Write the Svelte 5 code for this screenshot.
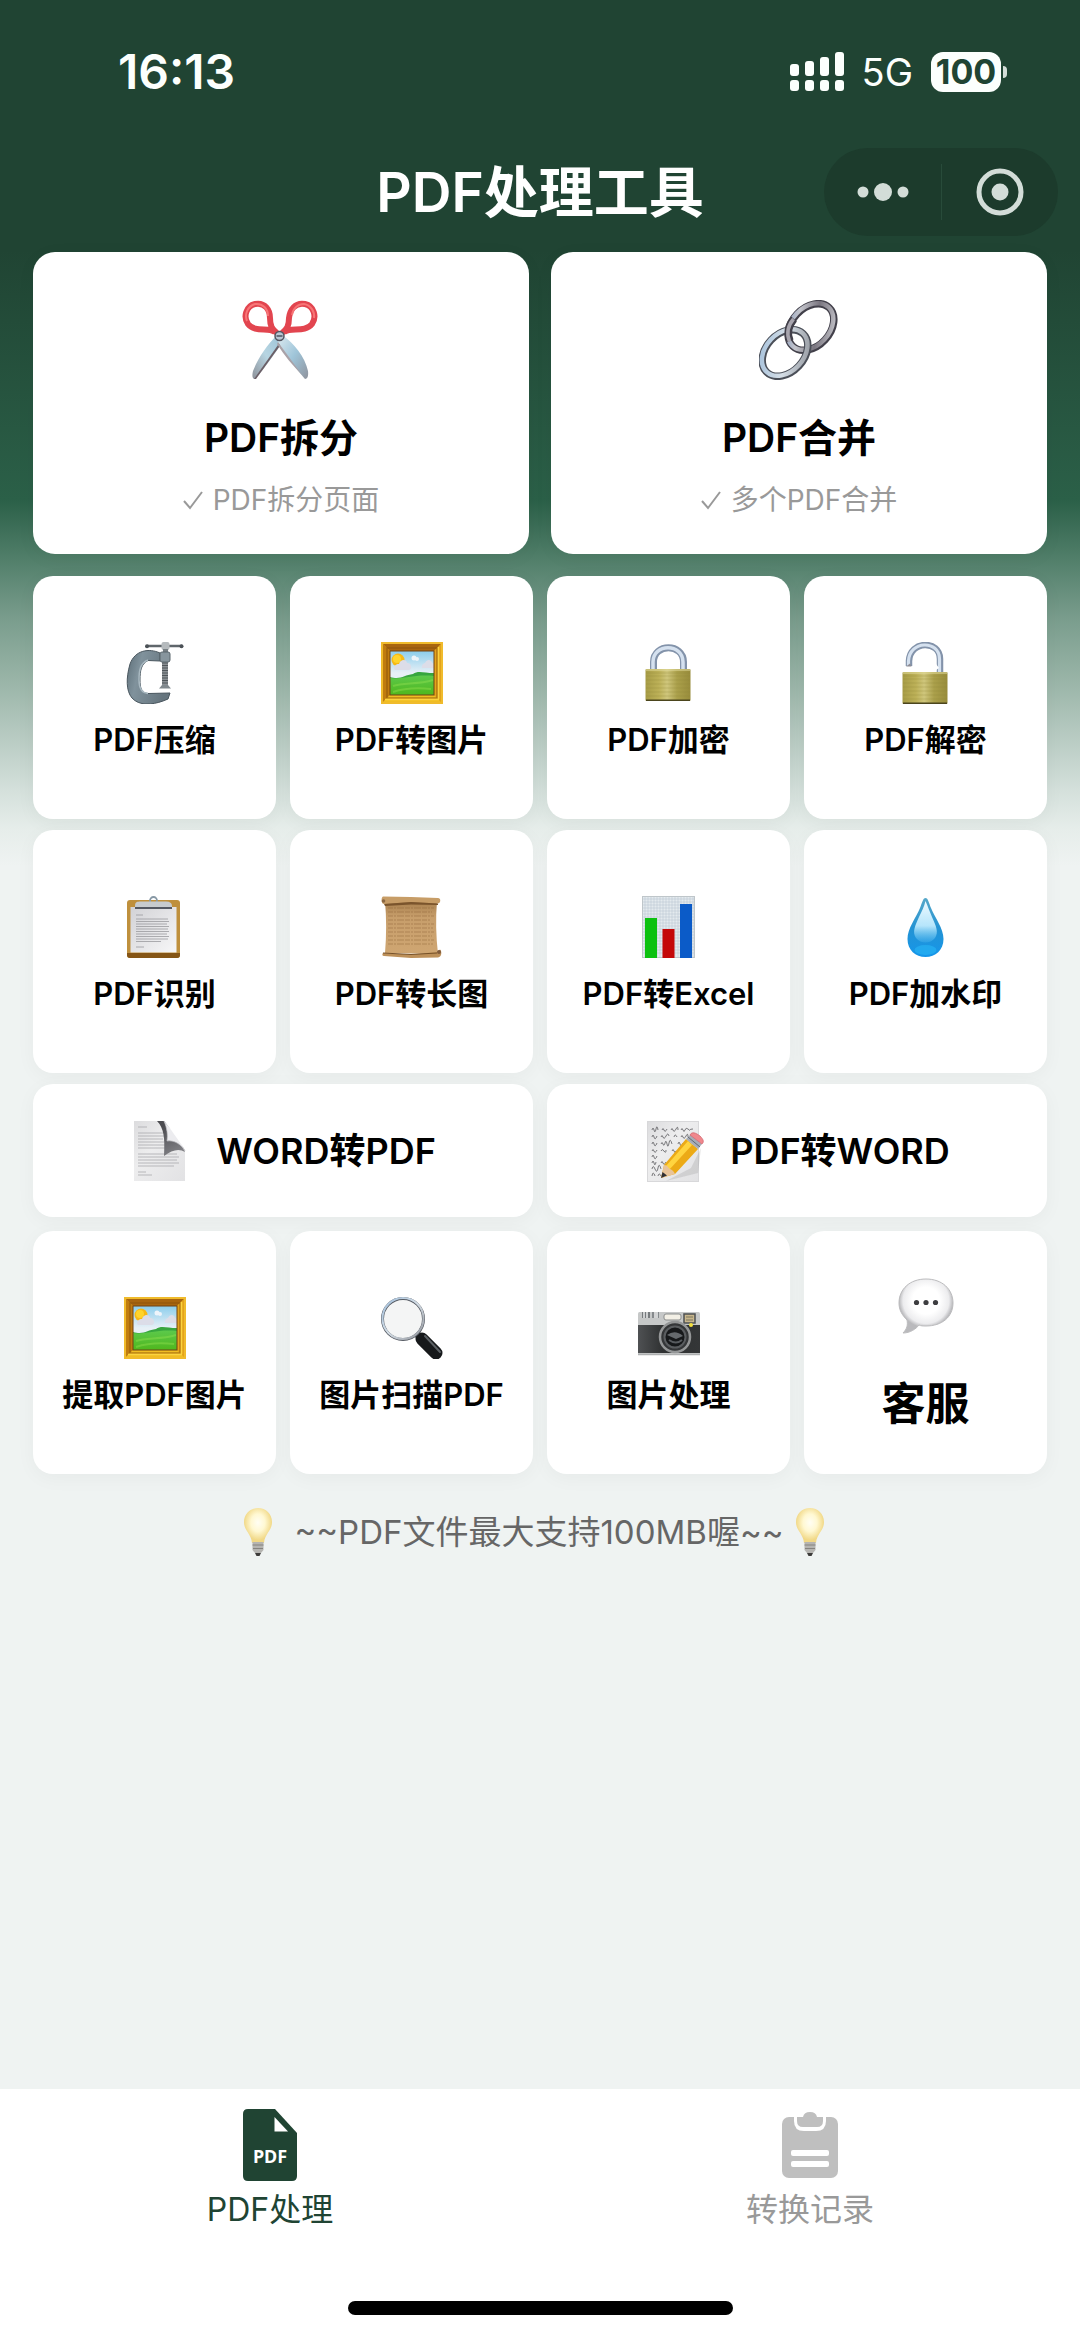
<script>
  const heroes = [
    { icon: 'scissors', title: 'PDF拆分', note: 'PDF拆分页面' },
    { icon: 'chain', title: 'PDF合并', note: '多个PDF合并' }
  ];
  const tools = [
    { icon: 'clamp', title: 'PDF压缩' },
    { icon: 'frame', title: 'PDF转图片' },
    { icon: 'lock', title: 'PDF加密' },
    { icon: 'unlock', title: 'PDF解密' },
    { icon: 'clipboard', title: 'PDF识别' },
    { icon: 'scroll', title: 'PDF转长图' },
    { icon: 'chart', title: 'PDF转Excel' },
    { icon: 'drop', title: 'PDF加水印' }
  ];
  const words = [
    { icon: 'page', title: 'WORD转PDF' },
    { icon: 'memo', title: 'PDF转WORD' }
  ];
  const extras = [
    { icon: 'frame', title: '提取PDF图片' },
    { icon: 'magnifier', title: '图片扫描PDF' },
    { icon: 'camera', title: '图片处理' }
  ];
  const bars = [12, 15, 19, 24];
  let tab = $state('tools');
</script>

{#snippet art(name)}
  {#if name === 'scissors'}
    <svg class="art big" viewBox="0 0 80 80" aria-hidden="true">
      <path d="M36 35 41 43C32 56 24 68 14 79 11 79 11 75 12 71 17 58 26 45 36 35Z" fill="url(#bladeL)" />
      <path d="M37 45 41 43 15 79 13 79Z" fill="#6b5f66" />
      <path d="M41 35C53 43 64 57 67 71 67.500 75 67 79 64 79 54 68 46 55 37 42Z" fill="url(#bladeR)" />
      <path d="M37 42 64 79 62 76C52 66 43 55 36 44Z" fill="#a9a2a8" />
      <g fill="none" stroke="#e2454f" stroke-width="6">
        <path d="M34 32C27 27 14 33 7 24 2 17 5 6 14 4 24 2 29 10 29 18 29 26 31 29 36 33" />
        <path d="M43 32C50 27 64 33 71 24 76 17 73 6 64 4 54 2 49 10 48 18 48 26 46 29 41 33" />
      </g>
      <g fill="none" stroke="#ff8584" stroke-width="2" opacity=".75">
        <path d="M6 21C3 14 7 6 14 4 22 3 27 9 27 16" />
        <path d="M51 15C52 8 57 4 63 4 70 5 74 12 73 18" />
      </g>
      <circle cx="38.500" cy="36" r="4.500" fill="#b9c6d3" stroke="#53545f" stroke-width="1.500" />
      <path d="M35.500 36h6" stroke="#4d5360" stroke-width="1.500" />
    </svg>
  {:else if name === 'chain'}
    <svg class="art big" viewBox="0 0 80 80" aria-hidden="true">
      <g fill="none">
        <ellipse cx="52" cy="27" rx="26.500" ry="19" transform="rotate(-47 52 27)" stroke="#42404a" stroke-width="7.500" />
        <ellipse cx="51.500" cy="26.500" rx="26.500" ry="19" transform="rotate(-47 51.500 26.500)" stroke="url(#steel)" stroke-width="4.500" />
        <ellipse cx="26" cy="53" rx="26.500" ry="19" transform="rotate(-47 26 53)" stroke="#4b4f58" stroke-width="7.500" />
        <ellipse cx="25.700" cy="52.500" rx="26.500" ry="19" transform="rotate(-47 25.700 52.500)" stroke="url(#steel2)" stroke-width="4.500" />
        <path d="M35 19C29 26 28 34 31 41" stroke="#42404a" stroke-width="7.500" />
        <path d="M34.500 19C28.500 26 27.500 34 30.500 41.500" stroke="#a8a5ae" stroke-width="3.500" />
      </g>
    </svg>
  {:else if name === 'clamp'}
    <svg class="art" viewBox="0 0 62 62" aria-hidden="true">
      <path d="M36 11C25 6 11 8 6 22 2 36 2 49 8 56 15 64 28 63 39 59L44 57 46 51 24 51.500C17 51 16 45 16 38 16 29 17 22 24 18.500L36 19Z" fill="url(#iron)" stroke="#49565e" />
      <path d="M24 51.500C17 51 15 45 15 38 15 29 16 21 24 18" fill="none" stroke="#a9b9c1" stroke-width="1.500" />
      <path d="M23 4H58" stroke="#5f666b" stroke-width="2.500" />
      <circle cx="23" cy="4.300" r="2" fill="#4b5156" /><circle cx="57.500" cy="4.300" r="2" fill="#4b5156" />
      <rect x="38" y="16" width="6" height="29" fill="#8b9094" />
      <path d="M41 18V45" stroke="#50565a" stroke-width="6" stroke-dasharray="1 1.500" />
      <rect x="37.500" y="0" width="8" height="8" rx="2" fill="#b5babd" />
      <rect x="39" y="7" width="5" height="4" fill="#777f84" />
      <rect x="36" y="10" width="10" height="10" rx="2" fill="#87959d" stroke="#5a666d" />
      <path d="M38 43H44L47 46.500H35Z" fill="#81898e" />
    </svg>
  {:else if name === 'frame'}
    <svg class="art" viewBox="0 0 62 62" aria-hidden="true">
      <rect width="62" height="62" fill="#d99a16" />
      <path d="M0 0H62L53 9H9Z" fill="#a8650f" /><path d="M0 0 9 9V53L0 62Z" fill="#c07c0f" />
      <path d="M62 0V62L53 53V9Z" fill="#e3a31b" /><path d="M0 62 9 53H53L62 62Z" fill="#f0bd22" />
      <rect x="1" y="1" width="60" height="60" fill="none" stroke="#f0bb2c" stroke-width="2" />
      <rect x="6" y="6" width="50" height="50" fill="none" stroke="#8c540c" stroke-width="1.500" opacity=".6" />
      <path d="M4 57.500H58M57.500 5V57" stroke="#fbd33f" stroke-width="1.500" />
      <rect x="9" y="9" width="44" height="44" fill="url(#sky)" />
      <circle cx="17" cy="18" r="6.500" fill="#f7b915" /><circle cx="16" cy="17" r="4" fill="#ffd42b" />
      <path d="M13 27C13 22 17 22 18 22 20 16 26 18 26 21 30 20 32 27 28 28H14ZM41 26C40 22 44 21 44 21 46 16 51 18 51 21L53 22V26Z" fill="#dcdde8" />
      <circle cx="33" cy="16" r="2.500" fill="#eef4fa" /><circle cx="36" cy="17" r="2" fill="#eef4fa" />
      <path d="M9 35C20 38 23 33 32 32 37 28 43 31 53 31V53H9Z" fill="#37a63e" />
      <path d="M9 36C20 38 33 32 53 34V53H9Z" fill="url(#grass)" />
      <path d="M12 44C23 40 36 43 52 38M12 50C24 46 40 46 50 47" fill="none" stroke="#a0e957" stroke-width="2" opacity=".35" />
      <rect x="9" y="9" width="44" height="44" fill="none" stroke="#704315" stroke-width="1" />
    </svg>
  {:else if name === 'lock' || name === 'unlock'}
    <svg class="art" viewBox="0 0 62 62" aria-hidden="true">
      {#if name === 'lock'}
        <path d="M15.500 28V20C15.500 1 45.500 1 45.500 20V28" fill="none" stroke="#8393aa" stroke-width="7" />
        <path d="M15 28V20C15 1 45 1 45 20V28" fill="none" stroke="#d5e1ef" stroke-width="3.500" />
      {:else}
        <path d="M14 24V19C15-2 45-2 45 17V32" fill="none" stroke="#8393aa" stroke-width="6.500" />
        <path d="M13.500 24V19C14.500-2 44.500-2 44.500 17V32" fill="none" stroke="#d5e1ef" stroke-width="3.200" />
        <path d="M11 24.500H16.500L15 21.500" fill="#8d8c94" /><path d="M41 22 44 26 41 28Z" fill="#fff" />
      {/if}
      <g transform={name === 'unlock' ? 'translate(0 3)' : undefined}>
        <rect x="7.500" y="27" width="45" height="32" rx="1" fill="url(#brass)" />
        <path d="M8 31H52M8 34H52M8 38H52M8 42H52M8 46H52M8 50H52M8 54H52" stroke="#8f863a" stroke-width=".7" opacity=".4" />
        <path d="M8 28H52" stroke="#e4dea0" /><path d="M8 58.300H52" stroke="#4b451d" stroke-width="1.500" />
      </g>
    </svg>
  {:else if name === 'clipboard'}
    <svg class="art" viewBox="0 0 62 62" aria-hidden="true">
      <rect x="3" y="4" width="53" height="58" rx="3" fill="#bf903d" />
      <path d="M3 57H56V59C56 61 55 62 53 62H6C4 62 3 61 3 59Z" fill="#855515" />
      <rect x="6.500" y="11" width="46" height="45.500" fill="url(#paper)" />
      <path d="M12 19H19M12 23H44M12 25.500H45M12 28H43M12 30.500H45M12 33H44M12 35.500H45M12 38H43M12 40.500H45M12 43H44M12 45.500H37M12 51H20" stroke="#9a9a9e" stroke-width=".8" />
      <circle cx="29.500" cy="4.500" r="3.500" fill="none" stroke="#8798a5" stroke-width="1.800" />
      <path d="M11 10C11 6 13 5.500 17 5.500H42C46 5.500 48 7 48 10V12H11Z" fill="#c7cbcf" />
      <path d="M11 12H48" stroke="#555963" stroke-width="2" />
    </svg>
  {:else if name === 'scroll'}
    <svg class="art" viewBox="0 0 62 62" aria-hidden="true">
      <path d="M4 5H56C54.500 23 55 40 57 58L4 57C5.500 39 5.500 22 4 5Z" fill="url(#parch)" />
      <path d="M7 12H53M7 16H51M7 20H53M7 24H50M7 28H53M7 32H52M7 36H53M7 40H51M7 44H53M7 48H52" stroke="#8d6237" stroke-width="1.200" stroke-dasharray="5 1 2 1 7 1" opacity=".45" />
      <path d="M2 .500 30 1 57 2C60 2 60 7 57 7.500L30 6 3 8C0 8 0 1 2 .500Z" fill="#c79d67" />
      <path d="M3 8 30 6 57 7.500 57 9 30 8.500 4 10Z" fill="#7a542c" />
      <path d="M2 57C1 58 1 60 3 60L30 62 57 61.500C61 61 61 55 59 53.500L56 56 30 58.500Z" fill="#bd9059" />
      <path d="M2 57 30 58.500 56 57" stroke="#765128" stroke-width="1" fill="none" />
      <circle cx="58" cy="56" r="2" fill="#805b3c" /><circle cx="2.500" cy="5" r="1.800" fill="#8a6641" />
    </svg>
  {:else if name === 'chart'}
    <svg class="art" viewBox="0 0 62 62" aria-hidden="true">
      <rect x="4" y="0" width="53" height="62" fill="#e4eaee" />
      <path d="M7 0V62M10 0V62M13 0V62M16 0V62M19 0V62M22 0V62M25 0V62M28 0V62M31 0V62M34 0V62M37 0V62M40 0V62M43 0V62M46 0V62M49 0V62M52 0V62M55 0V62M4 3H57M4 6H57M4 9H57M4 12H57M4 15H57M4 18H57M4 21H57M4 24H57M4 27H57M4 30H57M4 33H57M4 36H57M4 39H57M4 42H57M4 45H57M4 48H57M4 51H57M4 54H57M4 57H57" stroke="#b4c3cd" stroke-width=".5" />
      <rect x="4.500" y=".500" width="52" height="61" fill="none" stroke="#bfc6ca" />
      <rect x="7" y="22" width="12" height="40" fill="#0cc110" />
      <rect x="24.500" y="33" width="12" height="29" fill="#c40708" />
      <rect x="42" y="8" width="12" height="54" fill="#0b5bc8" />
    </svg>
  {:else if name === 'drop'}
    <svg class="art" viewBox="0 0 62 62" aria-hidden="true">
      <path d="M30.500 2C33 2 34 7 36 12 40 22 48.500 32 48.500 43 48.500 54 40.500 61 30.500 61S12.500 54 12.500 43C12.500 32 21 22 25 12 27 7 28 2 30.500 2Z" fill="url(#water)" />
      <path d="M30.500 5C33 11 35 16 37 21 41 30 44 36 40 42 35 48 26 48 21 42 17 36 20 30 24 21 27 15 29 11 30.500 5Z" fill="url(#gleam)" />
      <ellipse cx="30.500" cy="54" rx="11" ry="5" fill="#2fc0fb" opacity=".45" />
    </svg>
  {:else if name === 'page' || name === 'memo'}
    <svg class="art" viewBox="0 0 62 62" aria-hidden="true">
      {#if name === 'page'}
        <path d="M4 1H34L55 30V61H4Z" fill="url(#sheet)" />
        <path d="M8 7H17M8 13H33M8 16H34M8 19H33M8 22H34M8 25H35M8 28H35M8 34H47M8 37H49M8 40H47M8 43H49M8 46H44M8 52H16M8 55H22" stroke="#a9a9ad" stroke-width=".8" />
        <path d="M27 1C34 8 35 18 34 36 42 30 49 28 55 32L51 23 34 1Z" fill="url(#shade)" />
        <path d="M34 1C37 8 38 15 37 21 44 20 51 24 55 31L50 19Z" fill="#ececef" stroke="#bdbdc1" stroke-width=".7" />
        <path d="M34 0 56 31V0Z" fill="#fff" />
      {:else}
        <rect x="3.500" y="1.500" width="51" height="60" fill="url(#sheet)" stroke="#d8d8da" />
        <g fill="none" stroke="#5c5c60" stroke-width=".8">
          <path d="M8 10q1-4 2 0t2-1 2 1M18 10q1-3 2 0t3-1M27 10q1-3 2 0t3-1 2 1M37 10q1-3 2 0t2 0 3-1 2 1 3-1" />
          <path d="M8 17q1-4 2 0t3-1M17 17q1-3 2 0t3-1 3 0M30 17q1-4 3 0M37 17q1-3 2 0t3-1 2 1" />
          <path d="M8 24q1-4 2 0t3-1M17 24q1-3 2 0t2-1 2 1 2-1 3 1M34 24q1-4 2 0t3-1" />
          <path d="M8 31q1-3 2 0t3-1M17 31q1-3 3 0t2-1M28 31q1-3 2 0t2 0" />
          <path d="M8 37q1-4 2 0t3-1M8 43q1-4 2 0t2-1M17 43q1-3 2 0t3-1" />
          <path d="M8 49q1-5 3 0t3-1 3 1M8 56q1-6 3 0M14 56q1-4 3 0" />
        </g>
        <path d="M22 61 47 48 57 28 54 53Z" fill="#55555a" opacity=".15" />
        <path d="M17 58 20 45 42 19 54 29 31 54Z" fill="#ecaa16" />
        <path d="M22 46 44 21 48 25 25 50Z" fill="#ffd43f" />
        <path d="M17 58 20 45C24 45 24 48 26 49 29 50 30 52 31 54Z" fill="#e8c49a" />
        <path d="M17 58 18.500 52 23 55.500Z" fill="#303034" />
        <path d="M42 19 46 15 58 24 54 29Z" fill="#a8adb6" /><path d="M44 17 56 27" stroke="#626975" />
        <path d="M46 15C48 11 52 13 56 16 60 20 60 22 58 24Z" fill="#f0888d" stroke="#ce5f69" stroke-width=".7" />
      {/if}
    </svg>
  {:else if name === 'magnifier'}
    <svg class="art" viewBox="0 0 62 62" aria-hidden="true">
      <path d="M34 35 40 41" stroke="#656b70" stroke-width="7" />
      <path d="M41 42 55 56" stroke="#17191b" stroke-width="13" stroke-linecap="round" />
      <path d="M44 39 59 55" stroke="#5c6165" stroke-width="2" stroke-linecap="round" />
      <circle cx="22" cy="22" r="20.500" fill="#f4f5f5" stroke="#555a62" stroke-width="3" />
      <circle cx="22" cy="21.500" r="20.500" fill="none" stroke="url(#steel2)" stroke-width="2" />
    </svg>
  {:else if name === 'camera'}
    <svg class="art" viewBox="0 0 62 62" aria-hidden="true">
      <rect x="0" y="15" width="62" height="43" rx="1.500" fill="#c6c8c8" />
      <path d="M0 28H62V56H0Z" fill="url(#leather)" />
      <rect x="4" y="15" width="8" height="6" fill="#777b7e" /><rect x="14" y="15" width="7" height="6" fill="#85898c" />
      <path d="M6 15V21M9 15V21M17 15V21M19 15V21" stroke="#eceded" stroke-width="1.500" />
      <rect x="26" y="17" width="17" height="6" rx="2" fill="#f3f0e6" stroke="#8b8d8d" />
      <rect x="46" y="17" width="11" height="9" fill="#c8b68c" stroke="#4e5052" stroke-width="1.500" />
      <path d="M48 20H55M48 23H55" stroke="#7a765f" />
      <circle cx="37" cy="40" r="15" fill="#343638" stroke="#949697" stroke-width="2.500" />
      <circle cx="37" cy="40" r="10.500" fill="#16181a" stroke="#5a5d60" stroke-width="2" />
      <path d="M29 38Q37 32 45 39L38 42Z" fill="#65696d" /><path d="M31 43Q38 48 44 43" stroke="#575b5f" stroke-width="2" fill="none" />
      <circle cx="53" cy="28" r="2" fill="#f5e13d" />
      <path d="M0 57.500H62" stroke="#aeb0b1" stroke-width="1.500" />
    </svg>
  {:else if name === 'bubble'}
    <svg class="art talk" viewBox="0 0 56 56" aria-hidden="true">
      <path d="M28 1C44 1 55 11 55 25S44 48 28 48C25 48 23 48 21 47 18 51 12 55 5 55 9 51 10 47 9 42 4 37 1 32 1 25 1 11 12 1 28 1Z" fill="url(#balloon)" stroke="#bcbcbe" />
      <circle cx="18.500" cy="24.500" r="2.600" fill="#3d3d40" /><circle cx="28" cy="24.500" r="2.600" fill="#3d3d40" /><circle cx="37.500" cy="24.500" r="2.600" fill="#3d3d40" />
    </svg>
  {:else if name === 'bulb'}
    <svg class="bulb" viewBox="0 0 28 48" aria-hidden="true">
      <path d="M14 0C22 0 28 6 28 14 28 23 21 25 20 35H8C7 25 0 23 0 14 0 6 6 0 14 0Z" fill="url(#glow)" />
      <path d="M8.500 34H19.500V42L17 45H11L8.500 42Z" fill="#b5b4b1" />
      <path d="M8.500 37H19.500M9 40.500H19" stroke="#85837f" stroke-width="1" />
      <path d="M11 45H17L15.500 48H12.500Z" fill="#3d3b3a" />
    </svg>
  {/if}
{/snippet}

<svg class="defs" width="0" height="0" aria-hidden="true">
  <defs>
    <linearGradient id="bladeL" x1="1" y1="0" x2="0" y2="1"><stop stop-color="#9cc3d6" /><stop offset=".5" stop-color="#b7d5e2" /><stop offset="1" stop-color="#8d9199" /></linearGradient>
    <linearGradient id="bladeR" x2="1" y2="1"><stop stop-color="#dceaf0" /><stop offset=".5" stop-color="#9fc5d9" /><stop offset="1" stop-color="#8f939d" /></linearGradient>
    <linearGradient id="steel" x2="1" y2="1"><stop stop-color="#7b95be" /><stop offset=".3" stop-color="#c3c4cb" /><stop offset=".6" stop-color="#79757f" /><stop offset="1" stop-color="#d4d5da" /></linearGradient>
    <linearGradient id="steel2" x2="1" y2="1"><stop stop-color="#9fbdda" /><stop offset=".5" stop-color="#d5dee6" /><stop offset="1" stop-color="#8d9097" /></linearGradient>
    <linearGradient id="iron" x2="1" y2=".3"><stop stop-color="#5d6e78" /><stop offset=".35" stop-color="#80929c" /><stop offset="1" stop-color="#66757e" /></linearGradient>
    <linearGradient id="sky" x2="0" y2="1"><stop stop-color="#8bcdec" /><stop offset=".5" stop-color="#e7f0f6" /></linearGradient>
    <linearGradient id="grass" x2="0" y2="1"><stop stop-color="#5cc94b" /><stop offset="1" stop-color="#4fb71d" /></linearGradient>
    <linearGradient id="brass"><stop stop-color="#a79c46" /><stop offset=".3" stop-color="#bdb158" /><stop offset=".48" stop-color="#cfc67c" /><stop offset=".7" stop-color="#aba04b" /><stop offset="1" stop-color="#988c3b" /></linearGradient>
    <linearGradient id="paper" x2="1" y2="1"><stop stop-color="#d2d2d6" /><stop offset="1" stop-color="#f7f7f8" /></linearGradient>
    <linearGradient id="parch" x2="0" y2="1"><stop stop-color="#a87f4d" /><stop offset=".3" stop-color="#c79e6b" /><stop offset="1" stop-color="#cfa672" /></linearGradient>
    <linearGradient id="water" x2="0" y2="1"><stop stop-color="#57a8c9" /><stop offset=".5" stop-color="#2493d3" /><stop offset="1" stop-color="#1596ea" /></linearGradient>
    <linearGradient id="gleam" x2="0" y2="1"><stop stop-color="#effaff" /><stop offset=".6" stop-color="#b5e5fb" /><stop offset="1" stop-color="#6ecbf8" stop-opacity=".2" /></linearGradient>
    <linearGradient id="sheet" x2="1" y2="1"><stop stop-color="#dcdcde" /><stop offset=".4" stop-color="#ededee" /><stop offset="1" stop-color="#e2e2e4" /></linearGradient>
    <linearGradient id="shade" x1=".6" y2="1"><stop stop-color="#4c4c50" /><stop offset="1" stop-color="#8a8a8f" /></linearGradient>
    <linearGradient id="leather" x2="1"><stop stop-color="#4f5153" /><stop offset=".4" stop-color="#2f3132" /><stop offset="1" stop-color="#343637" /></linearGradient>
    <radialGradient id="balloon" cy=".4"><stop offset=".5" stop-color="#fff" /><stop offset=".85" stop-color="#ececee" /><stop offset="1" stop-color="#b9b9bc" /></radialGradient>
    <radialGradient id="glow" cy=".42"><stop stop-color="#fffef4" /><stop offset=".5" stop-color="#fff8d2" /><stop offset="1" stop-color="#f1d886" /></radialGradient>
  </defs>
</svg>

<div class="screen">
  <div class="status">
    <time>16:13</time>
    <div class="radio">
      <svg class="signal" viewBox="0 0 54 40" aria-label="信号">
        {#each bars as h, i}
          <rect x={i * 15} y={24 - h} width="9" height={h} rx="3" />
          <rect x={i * 15} y="28" width="9" height="11" rx="3" />
        {/each}
      </svg>
      <span class="net">5G</span>
      <span class="battery">100</span>
    </div>
  </div>

  <header>
    <h1>PDF处理工具</h1>
    <div class="capsule">
      <button aria-label="更多">
        <svg viewBox="0 0 56 24" width="56" height="24"><circle cx="8" cy="12" r="5.500" /><circle cx="28" cy="12" r="9" /><circle cx="48" cy="12" r="5.500" /></svg>
      </button>
      <button aria-label="关闭">
        <svg viewBox="0 0 48 48" width="48" height="48"><circle cx="24" cy="24" r="21" fill="none" stroke="#d3ddd8" stroke-width="5" /><circle cx="24" cy="24" r="8.500" /></svg>
      </button>
    </div>
  </header>

  <main>
    <section class="heroes">
      {#each heroes as item}
        <button class="card hero">
          {@render art(item.icon)}
          <strong>{item.title}</strong>
          <span class="note">
            <svg viewBox="0 0 20 20" width="20" height="20" aria-hidden="true"><path d="M1 11 7 18 19 2" fill="none" stroke="#999" stroke-width="2" /></svg>
            {item.note}
          </span>
        </button>
      {/each}
    </section>

    <section class="tools">
      {#each tools as item}
        <button class="card tile">{@render art(item.icon)}<strong>{item.title}</strong></button>
      {/each}
    </section>

    <section class="words">
      {#each words as item}
        <button class="card word">{@render art(item.icon)}<strong>{item.title}</strong></button>
      {/each}
    </section>

    <section class="tools extras">
      {#each extras as item}
        <button class="card tile">{@render art(item.icon)}<strong>{item.title}</strong></button>
      {/each}
      <button class="card tile service">{@render art('bubble')}<strong>客服</strong></button>
    </section>

    <p class="hint">{@render art('bulb')}<span>~~PDF文件最大支持100MB喔~~</span>{@render art('bulb')}</p>
  </main>

  <footer>
    <nav>
      <button class:active={tab === 'tools'} onclick={() => (tab = 'tools')}>
        <svg viewBox="0 0 54 72" width="54" height="72" aria-hidden="true">
          <path d="M5 0H32L54 24V67Q54 72 49 72H5Q0 72 0 67V5Q0 0 5 0Z" fill="currentColor" />
          <path d="M31.500 8V22.500H45Z" fill="#fff" />
          <text x="27" y="54" text-anchor="middle">PDF</text>
        </svg>
        <span>PDF处理</span>
      </button>
      <button class:active={tab === 'history'} onclick={() => (tab = 'history')}>
        <svg viewBox="0 0 56 72" width="56" height="72" aria-hidden="true">
          <rect x="0" y="8" width="56" height="61" rx="7" fill="#bfbfbf" />
          <path d="M12 6H44V12Q44 22 34 22H22Q12 22 12 12Z" fill="#fff" />
          <path d="M15 8H21Q22 3 28 3T35 8H41V12Q41 18 35 18H21Q15 18 15 12Z" fill="#bfbfbf" />
          <rect x="9" y="41" width="38" height="6" rx="2" fill="#fff" /><rect x="9" y="52" width="38" height="6" rx="2" fill="#fff" />
        </svg>
        <span>转换记录</span>
      </button>
    </nav>
    <div class="home"></div>
  </footer>
</div>

<style>
  :global(body) { margin: 0; }
  .defs { position: absolute; }
  .screen {
    box-sizing: border-box;
    min-height: 100vh;
    display: flex;
    flex-direction: column;
    font-family: Inter, "Noto Sans CJK SC", sans-serif;
    color: #000;
    background: linear-gradient(#204433 0, #204433 250px, #2b6048 500px, #4f7d68 556px, #7a9d8d 619px, #9ab5a8 682px, #bccec6 745px, #d4e0db 790px, #e6edea 829px, #eff3f2 866px);
  }
  button { font: inherit; color: inherit; border: 0; background: none; padding: 0; cursor: pointer; }
  h1, p { margin: 0; }
  svg { display: block; flex: none; }

  .status {
    height: 144px;
    box-sizing: border-box;
    padding: 0 79px 0 118px;
    display: flex;
    align-items: center;
    justify-content: space-between;
    color: #fcfffd;
  }
  time { font-size: 48px; font-weight: 600; line-height: 56px; }
  .radio { display: flex; align-items: center; }
  .signal { width: 54px; height: 40px; fill: #fcfffd; }
  .net { margin: 0 18px; font-size: 38px; line-height: 44px; }
  .battery {
    position: relative;
    width: 70px;
    border-radius: 12px;
    background: #fcfffd;
    color: #204433;
    font-size: 34px;
    font-weight: 700;
    line-height: 40px;
    text-align: center;
  }
  .battery::after {
    content: "";
    position: absolute;
    left: 100%;
    top: 14px;
    margin-left: 2px;
    width: 4px;
    height: 12px;
    border-radius: 0 4px 4px 0;
    background: #d3ddd8;
  }

  header {
    display: grid;
    grid-template-columns: 1fr auto 1fr;
    align-items: center;
    padding: 4px 22px 16px;
  }
  h1 { grid-column: 2; color: #fff; font-size: 55px; font-weight: 600; line-height: 80px; white-space: nowrap; }
  .capsule {
    justify-self: end;
    width: 234px;
    height: 88px;
    display: grid;
    grid-template-columns: 1fr 1fr;
    align-items: center;
    border-radius: 44px;
    background: #1c3b2c;
    fill: #d3ddd8;
  }
  .capsule button { display: grid; place-items: center; height: 56px; }
  .capsule button + button { border-left: 1px solid #284b3a; }

  main { flex: 1; padding: 0 33px 40px; display: flex; flex-direction: column; }
  .heroes, .words { display: grid; grid-template-columns: 1fr 1fr; }
  .heroes { gap: 22px; }
  .words { gap: 14px; margin-top: 11px; }
  .tools { display: grid; grid-template-columns: repeat(4, 1fr); gap: 11px 14px; margin-top: 22px; }
  .extras { margin-top: 14px; }

  .card {
    display: flex;
    align-items: center;
    background: #fff;
    border-radius: 20px;
    box-shadow: 0 4px 20px rgba(0, 0, 0, .04);
    white-space: nowrap;
  }
  .hero { flex-direction: column; padding: 48px 0 36px; border-radius: 22px; }
  .hero strong { margin-top: 32px; font-size: 39px; line-height: 52px; }
  .note { margin-top: 18px; display: flex; align-items: center; gap: 10px; font-size: 28px; line-height: 36px; color: #999; }
  .tile { flex-direction: column; aspect-ratio: 1; padding-top: 66px; box-sizing: border-box; }
  .tile strong { margin-top: 18px; font-size: 31px; line-height: 36px; }
  .word { justify-content: center; gap: 24px; height: 133px; }
  .word strong { font-size: 36px; line-height: 48px; }
  .tile.service { padding-top: 47px; }
  .tile.service strong { margin-top: 40px; font-size: 44px; line-height: 60px; }
  strong { font-weight: 600; }

  .art { width: 62px; height: 62px; }
  .big { width: 80px; height: 80px; }
  .talk { width: 56px; height: 56px; }

  .hint { margin-top: 34px; padding-right: 12px; display: flex; justify-content: center; align-items: center; gap: 12px; font-size: 33px; line-height: 48px; color: #666; }
  .hint span { margin-left: 10px; }
  .bulb { width: 28px; height: 48px; }

  footer { background: #fff; padding: 20px 0 22px; }
  nav { display: grid; grid-template-columns: 1fr 1fr; }
  nav button { display: flex; flex-direction: column; align-items: center; gap: 7px; color: #999; font-size: 32px; line-height: 44px; }
  nav .active { color: #204433; }
  nav text { font: 700 18px "Noto Sans", sans-serif; fill: #fff; }
  .home { width: 385px; height: 14px; margin: 69px auto 0; border-radius: 7px; background: #000; }
</style>
